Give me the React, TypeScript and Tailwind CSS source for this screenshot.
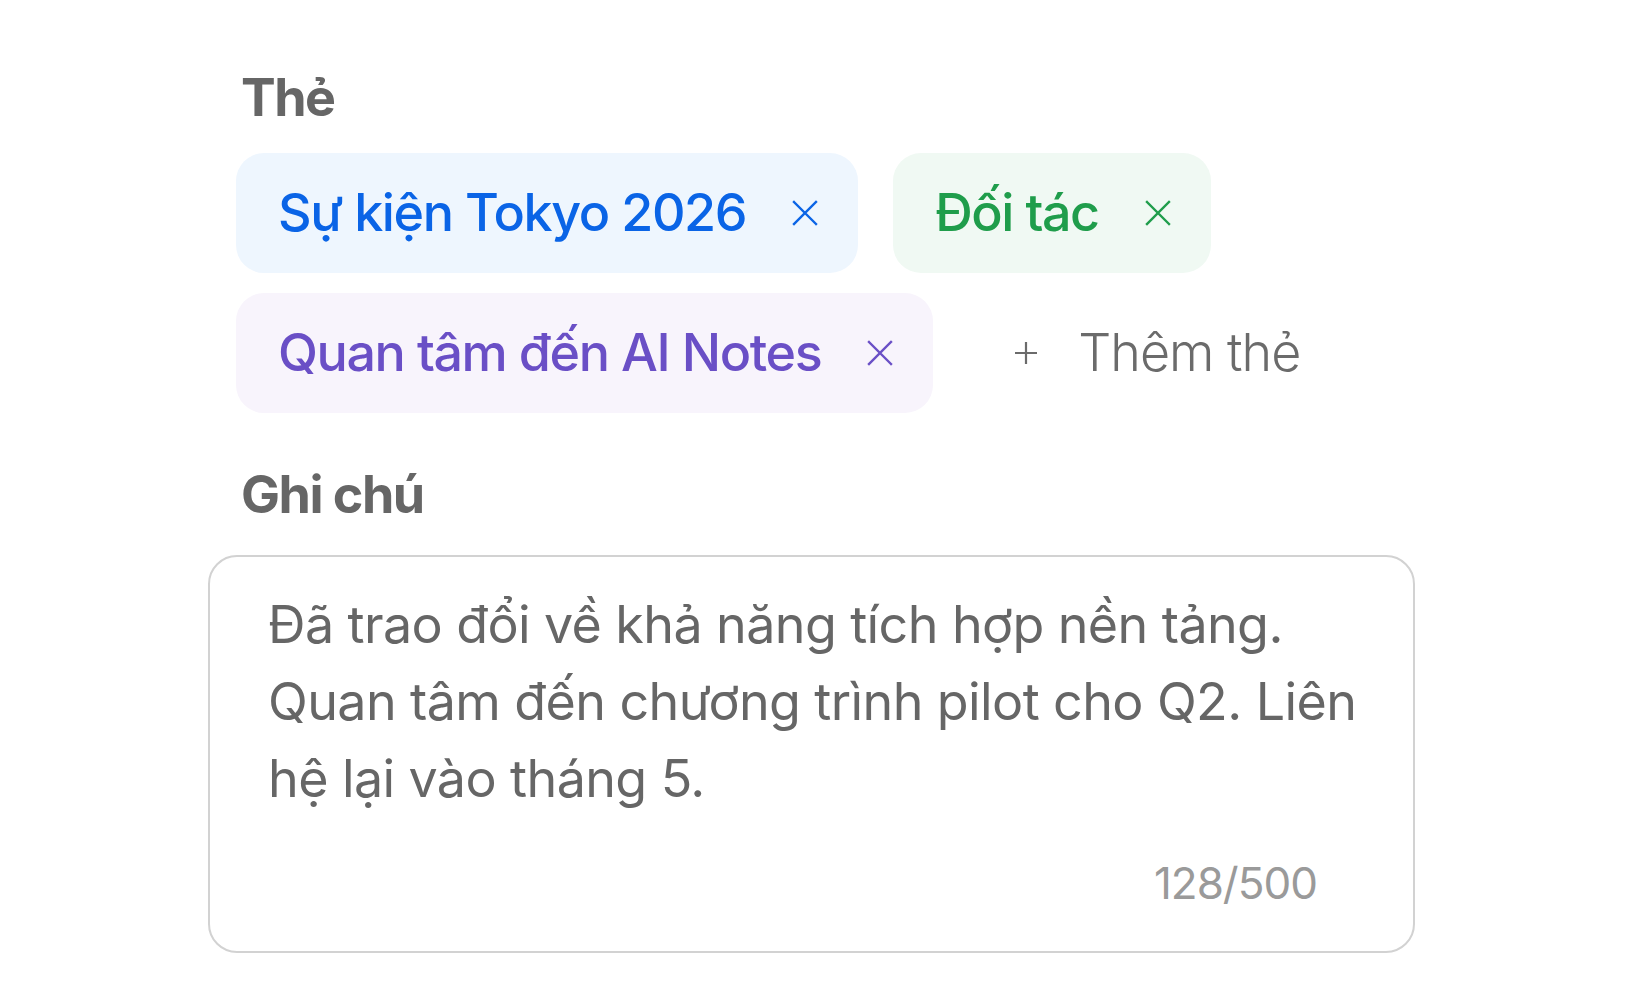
import React from "react";

type TagTone = "blue" | "green" | "purple";

const tones: Record<TagTone, { box: string; text: string }> = {
  blue: { box: "bg-[#eef6fe]", text: "text-[#0a64e6]" },
  green: { box: "bg-[#f0f9f3]", text: "text-[#1f9d4b]" },
  purple: { box: "bg-[#f8f4fc]", text: "text-[#6a4fc6]" },
};

function CloseIcon() {
  return (
    <svg width="26" height="26" viewBox="0 0 26 26" fill="none" stroke="currentColor" strokeWidth="2.4" strokeLinecap="square">
      <path d="M2 2 L24 24 M24 2 L2 24" />
    </svg>
  );
}

function PlusIcon() {
  return (
    <svg width="24" height="24" viewBox="0 0 24 24" fill="none" stroke="currentColor" strokeWidth="2.2">
      <path d="M12 1 V23 M1 12 H23" />
    </svg>
  );
}

function Tag({ label, tone }: { label: string; tone: TagTone }) {
  const t = tones[tone];
  return (
    <div className={`h-[120px] flex items-center gap-[46px] pl-[42px] pr-[40px] rounded-[28px] ${t.box} ${t.text}`}>
      <span className="text-[52px] font-medium leading-none tracking-[-1.4px]">{label}</span>
      <CloseIcon />
    </div>
  );
}

export default function App() {
  return (
    <div className="w-full h-[1000px] bg-white font-['Inter','Noto_Sans',sans-serif] pl-[208px] pt-[67px]">
      <div className="w-[1207px] flex flex-col">
        {/* Tags */}
        <div className="ml-[33px] text-[52px] leading-[1.2] font-bold text-[#666666] tracking-[-1.5px]">Thẻ</div>
        <div className="ml-[28px] mt-[24px] flex flex-wrap gap-x-[35px] gap-y-[20px] w-[1150px]">
          <Tag label="Sự kiện Tokyo 2026" tone="blue" />
          <Tag label="Đối tác" tone="green" />
          <Tag label="Quan tâm đến AI Notes" tone="purple" />
          <button className="h-[120px] flex items-center gap-[40px] pl-[46px] pr-[42px] text-[#6b6b6b]">
            <PlusIcon />
            <span className="text-[52px] font-light leading-none tracking-[-1px]">Thêm thẻ</span>
          </button>
        </div>

        {/* Notes */}
        <div className="ml-[33px] mt-[51px] text-[52px] leading-[1.2] font-bold text-[#666666] tracking-[-1.5px]">Ghi chú</div>
        <div className="mt-[28px] h-[398px] border-2 border-[#d2d2d2] rounded-[29px] pl-[58px] pr-[40px] pt-[29px] flex flex-col">
          <p className="text-[52px] leading-[77px] text-[#666666] tracking-[-0.6px]">
            Đã trao đổi về khả năng tích hợp nền tảng. Quan tâm đến chương trình pilot cho Q2. Liên hệ lại vào tháng 5.
          </p>
          <div className="self-end mr-[56px] mt-[40px] text-[44px] leading-[1.2] text-[#9a9a9a] tracking-[-1px]">128/500</div>
        </div>
      </div>
    </div>
  );
}
